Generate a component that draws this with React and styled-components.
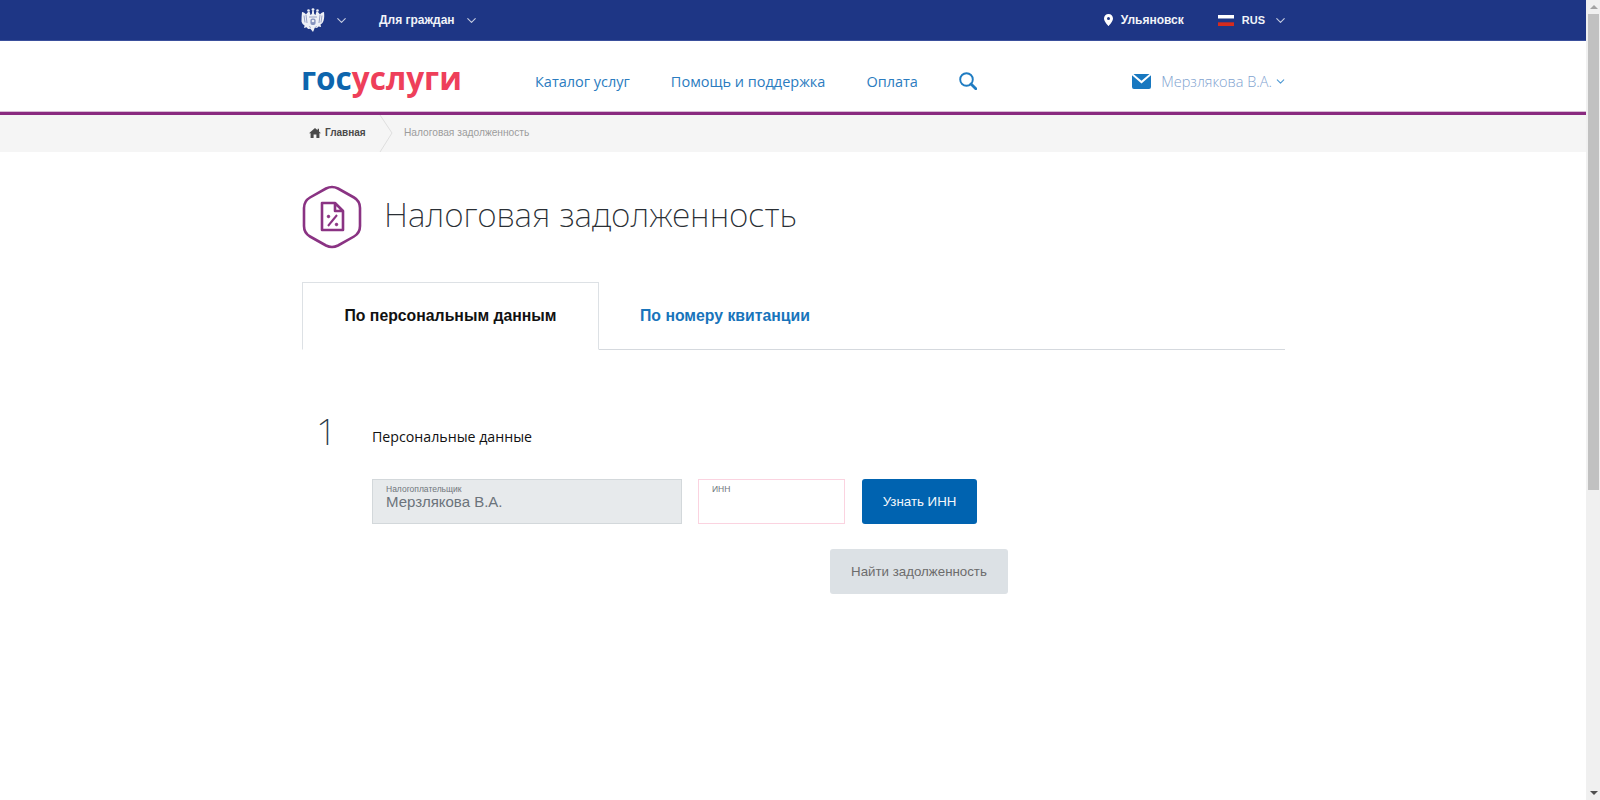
import styled, { createGlobalStyle } from "styled-components";
import { ChevronDown } from "lucide-react";

const Global = createGlobalStyle`
  html, body { margin: 0; padding: 0; height: 100%; overflow: hidden; background: #fff; }
  * { box-sizing: border-box; }
`;

const Frame = styled.div`
  display: flex;
  width: 1600px;
  height: 800px;
  font-family: "Liberation Sans", Arial, sans-serif;
`;

const Page = styled.div`
  flex: 1;
  min-width: 0;
`;

const Scrollbar = styled.div`
  width: 14px;
  background: #f0f0f0;
  display: flex;
  flex-direction: column;
  align-items: center;
  padding: 0 1px 0 2px;
`;

const ScrollArrow = styled.div`
  width: 100%;
  height: 14px;
  display: flex;
  align-items: center;
  justify-content: center;
  &::before {
    content: "";
    border-left: 4px solid transparent;
    border-right: 4px solid transparent;
    ${(p) => (p.$up ? "border-bottom: 4px solid #a3a3a3;" : "border-top: 4px solid #505050;")}
  }
`;

const Thumb = styled.div`
  width: 100%;
  height: 476px;
  background: #c1c1c1;
`;

const ScrollTrack = styled.div`
  flex: 1;
  width: 100%;
`;

const TopBar = styled.div`
  height: 41px;
  background: #1e3685;
  border-bottom: 1px solid #3a4f9c;
  color: #fff;
`;

const Inner = styled.div`
  width: 984px;
  margin-left: 301px;
  height: 100%;
  display: flex;
  align-items: center;
`;

const TopItem = styled.div`
  display: flex;
  align-items: center;
  font-size: ${(p) => p.$size || 12}px;
  font-weight: 700;
  color: #f1f3f8;
  margin-left: ${(p) => p.$left || 0}px;
`;

const Spacer = styled.div`
  flex: 1;
`;

const Header = styled.div`
  height: 71px;
  padding-top: 9px;
  background: #fff;
`;

const Logo = styled.div`
  font-family: "Open Sans", sans-serif;
  font-weight: 700;
  font-size: 31.5px;
  line-height: 40px;
  width: 234px;
  margin-top: -7px;
  color: #ee3f5a;
  & > span { color: #0d65ad; }
`;

const NavLink = styled.a`
  font-family: "Open Sans", sans-serif;
  font-size: 14.5px;
  color: #2b7cc0;
  margin-right: 41px;
  white-space: nowrap;
`;

const UserName = styled.span`
  font-family: "Open Sans", sans-serif;
  font-weight: 300;
  font-size: 14.5px;
  color: #7fa3d0;
  margin-left: 10px;
`;

const Rule = styled.div`
  height: 3px;
  background: #8a2a80;
  box-shadow: 0 -1px 0 #d9bdd6;
`;

const Crumbs = styled.div`
  height: 37px;
  background: #f5f5f5;
`;

const CrumbHome = styled.div`
  position: relative;
  display: flex;
  align-items: center;
  gap: 4px;
  height: 37px;
  padding: 0 0 2px 8px;
  width: 79px;
  margin-right: 24px;
  font-size: 10px;
  font-weight: 700;
  color: #4a4a4a;
`;

const CrumbArrow = styled.svg`
  position: absolute;
  right: -13px;
  top: 0;
`;

const CrumbCurrent = styled.span`
  font-size: 10.2px;
  margin-bottom: 2px;
  color: #9c9c9c;
`;

const Content = styled.div`
  width: 983px;
  margin-left: 302px;
`;

const TitleRow = styled.div`
  display: flex;
  align-items: center;
  gap: 22px;
  padding-top: 33px;
`;

const Title = styled.h1`
  margin: 0 0 6px;
  font-family: "Noto Sans", sans-serif;
  font-weight: 200;
  font-size: 33.5px;
  letter-spacing: 0.15px;
  color: #2a2f35;
`;

const Tabs = styled.div`
  display: flex;
  margin-top: 33px;
  height: 68px;
  border-bottom: 1px solid #d5d9de;
`;

const Tab = styled.div`
  width: ${(p) => (p.$active ? "297px" : "auto")};
  height: ${(p) => (p.$active ? 68 : 67)}px;
  padding-left: ${(p) => (p.$active ? 0 : 41)}px;
  display: flex;
  align-items: center;
  justify-content: ${(p) => (p.$active ? "center" : "flex-start")};
  font-size: 15.8px;
  font-weight: 700;
  color: ${(p) => (p.$active ? "#111" : "#1874bb")};
  ${(p) => p.$active && "background: #fff; border: 1px solid #dde1e5; border-bottom: 1px solid #fff;"}
`;

const StepRow = styled.div`
  display: flex;
  align-items: center;
  height: 40px;
  margin-top: 61px;
`;

const StepNumber = styled.div`
  width: 70px;
  padding-left: 14px;
  font-family: "Noto Sans", sans-serif;
  font-weight: 200;
  font-size: 37px;
  line-height: 40px;
  color: #2a3a4a;
`;

const StepTitle = styled.div`
  font-family: "Open Sans", sans-serif;
  font-size: 14.2px;
  color: #111;
  margin-top: 11px;
`;

const FieldRow = styled.div`
  display: flex;
  gap: 16px;
  margin: 28px 0 0 70px;
`;

const Field = styled.div`
  width: ${(p) => p.$w}px;
  height: 45px;
  padding: 5px 13px 0;
  background: ${(p) => (p.$filled ? "#e7eaec" : "#fff")};
  border: 1px solid ${(p) => (p.$filled ? "#d3d8db" : "#fbd3e0")};
`;

const FieldLabel = styled.div`
  font-size: 8.5px;
  line-height: 9px;
  color: #70767c;
`;

const FieldValue = styled.div`
  font-size: 15px;
  line-height: 16px;
  color: #6b737b;
`;

const Button = styled.button`
  height: 45px;
  width: ${(p) => p.$w}px;
  margin-left: ${(p) => p.$left || 0}px;
  border: 0;
  border-radius: 3px;
  font-family: "Liberation Sans", Arial, sans-serif;
  font-size: 13.3px;
  background: ${(p) => (p.$muted ? "#dce1e5" : "#0063b0")};
  color: ${(p) => (p.$muted ? "#6c6c6c" : "#f3f7fb")};
`;

const SubmitRow = styled.div`
  margin: 25px 0 0 528px;
`;

const Emblem = () => (
  <svg width="24" height="25" viewBox="0 0 24 25" fill="#eef0f6" stroke="none">
    <path d="M1 4c1.500 0 3 1 4 2.500C6 5 7 3.600 8.500 3.400 9 4.600 9.300 5.600 9.400 7L10.800 6l.4-3h1.600l.4 3L14.600 7c.1-1.400.4-2.400.9-3.600C17 3.600 18 5 19 6.500c1-1.500 2.500-2.500 4-2.500.4 3 .4 6-.4 8.500-.5 1.800-1.600 3.200-3.100 4.100l.6 2.400-2.600-.6-1.500 1.600-2.300-.2-.8 2.200L12 24l-1.800-2.300-.8-1-2.300.2-1.500-1.600-2.600.6.600-2.400c-1.500-.9-2.600-2.300-3.100-4.100C.6 10 .6 7 1 4z" />
    <circle cx="7.500" cy="2.500" r="1.300" />
    <circle cx="12" cy="1.600" r="1.400" />
    <circle cx="16.500" cy="2.500" r="1.300" />
    <path fill="none" stroke="#7f8cb9" strokeWidth=".8" d="M3 7.500l1 7M5 7l1 8M19 7l-1 8M21 7.500l-1 7M8 9h8" />
    <rect x="9.400" y="10.500" width="5.200" height="6.500" rx="2" fill="#8693bd" />
    <circle cx="12" cy="13" r="1.300" />
    <path fill="none" stroke="#7f8cb9" strokeWidth=".7" d="M8 18.500l2 1M16 18.500l-2 1" />
  </svg>
);

const Pin = () => (
  <svg width="9" height="12" viewBox="0 0 9 12">
    <path fillRule="evenodd" fill="#fff" d="M4.500 0C2 0 0 2 0 4.400 0 7.400 4.500 12 4.500 12S9 7.400 9 4.400C9 2 7 0 4.500 0zm0 3a1.500 1.500 0 1 1 0 3 1.500 1.500 0 0 1 0-3z" />
  </svg>
);

const Flag = () => (
  <svg width="16" height="11" viewBox="0 0 16 11" style={{ marginRight: 8 }}>
    <rect width="16" height="3.700" fill="#fff" />
    <rect y="3.700" width="16" height="3.600" fill="#1e3685" />
    <rect y="7.300" width="16" height="3.700" fill="#d52b1e" />
  </svg>
);

const Mail = () => (
  <svg width="19" height="15" viewBox="0 0 19 15">
    <path fill="#1878c0" d="M1.500 0h16L9.500 6.800 1.500 0zM0 1.300V13a2 2 0 0 0 2 2h15a2 2 0 0 0 2-2V1.300L9.500 9.400 0 1.300z" />
  </svg>
);

const SearchIcon = () => (
  <svg width="18" height="18" viewBox="0 0 18 18" fill="none" stroke="#1f7cc2">
    <circle cx="7.500" cy="7.500" r="6.300" strokeWidth="1.900" />
    <path d="M12 12l4.800 4.800" strokeWidth="2.800" strokeLinecap="round" />
  </svg>
);

const Home = () => (
  <svg width="12" height="10" viewBox="0 0 12 10">
    <path fill="#4a4a4a" d="M6 0L0 5.200h1.600V10h3V6.600h2.800V10h3V5.200H12L10 3.400V.8H8.600v1.400L6 0z" />
  </svg>
);

const TaxIcon = () => (
  <svg width="60" height="64" viewBox="0 0 60 64" fill="none" stroke="#8a3383">
    <path strokeWidth="2.600" d="M24 3.500Q30 .5 36 3.500L52 12.500Q58 16 58 23V41Q58 48 52 51.500L36 60.500Q30 63.500 24 60.500L8 51.500Q2 48 2 41V23Q2 16 8 12.500Z" />
    <path strokeWidth="2.600" strokeLinejoin="round" d="M20 18h13l8 8v19H20zM33 18v8h8" />
    <path strokeWidth="2" d="M35 30l-9 11" />
    <circle cx="26.500" cy="31.500" r="1.400" fill="#8a3383" strokeWidth="0.600" />
    <circle cx="34.500" cy="39.500" r="1.400" fill="#8a3383" strokeWidth="0.600" />
  </svg>
);

const App = () => {
  return (
    <Frame>
      <Global />
      <Page>
        <TopBar>
          <Inner>
            <Emblem />
            <ChevronDown size={15} strokeWidth={1.8} color="#c4cbe0" style={{ marginLeft: 9 }} />
            <TopItem $left={30}>Для граждан</TopItem>
            <ChevronDown size={15} strokeWidth={1.8} color="#c4cbe0" style={{ marginLeft: 9 }} />
            <Spacer />
            <Pin />
            <TopItem $left={8}>Ульяновск</TopItem>
            <TopItem $left={34} $size={11}>
              <Flag />
              RUS
            </TopItem>
            <ChevronDown size={15} strokeWidth={1.8} color="#c4cbe0" style={{ marginLeft: 8, marginRight: -3 }} />
          </Inner>
        </TopBar>
        <Header>
          <Inner>
            <Logo>
              <span>гос</span>услуги
            </Logo>
            <NavLink>Каталог услуг</NavLink>
            <NavLink>Помощь и поддержка</NavLink>
            <NavLink>Оплата</NavLink>
            <SearchIcon />
            <Spacer />
            <Mail />
            <UserName>Мерзлякова В.А.</UserName>
            <ChevronDown size={13} strokeWidth={2} color="#4f9ad4" style={{ marginLeft: 2, marginRight: -2 }} />
          </Inner>
        </Header>
        <Rule />
        <Crumbs>
          <Inner>
            <CrumbHome>
              <Home />
              Главная
              <CrumbArrow width="14" height="37" viewBox="0 0 14 37" fill="none">
                <path d="M1 0l12 18L1 37" stroke="#dedede" />
              </CrumbArrow>
            </CrumbHome>
            <CrumbCurrent>Налоговая задолженность</CrumbCurrent>
          </Inner>
        </Crumbs>
        <Content>
          <TitleRow>
            <TaxIcon />
            <Title>Налоговая задолженность</Title>
          </TitleRow>
          <Tabs>
            <Tab $active>По персональным данным</Tab>
            <Tab>По номеру квитанции</Tab>
          </Tabs>
          <StepRow>
            <StepNumber>1</StepNumber>
            <StepTitle>Персональные данные</StepTitle>
          </StepRow>
          <FieldRow>
            <Field $filled $w={310}>
              <FieldLabel>Налогоплательщик</FieldLabel>
              <FieldValue>Мерзлякова В.А.</FieldValue>
            </Field>
            <Field $w={147}>
              <FieldLabel>ИНН</FieldLabel>
            </Field>
            <Button $w={115} $left={1}>Узнать ИНН</Button>
          </FieldRow>
          <SubmitRow>
            <Button $muted $w={178}>Найти задолженность</Button>
          </SubmitRow>
        </Content>
      </Page>
      <Scrollbar>
        <ScrollArrow $up />
        <Thumb />
        <ScrollTrack />
        <ScrollArrow />
      </Scrollbar>
    </Frame>
  );
};

export default App;
